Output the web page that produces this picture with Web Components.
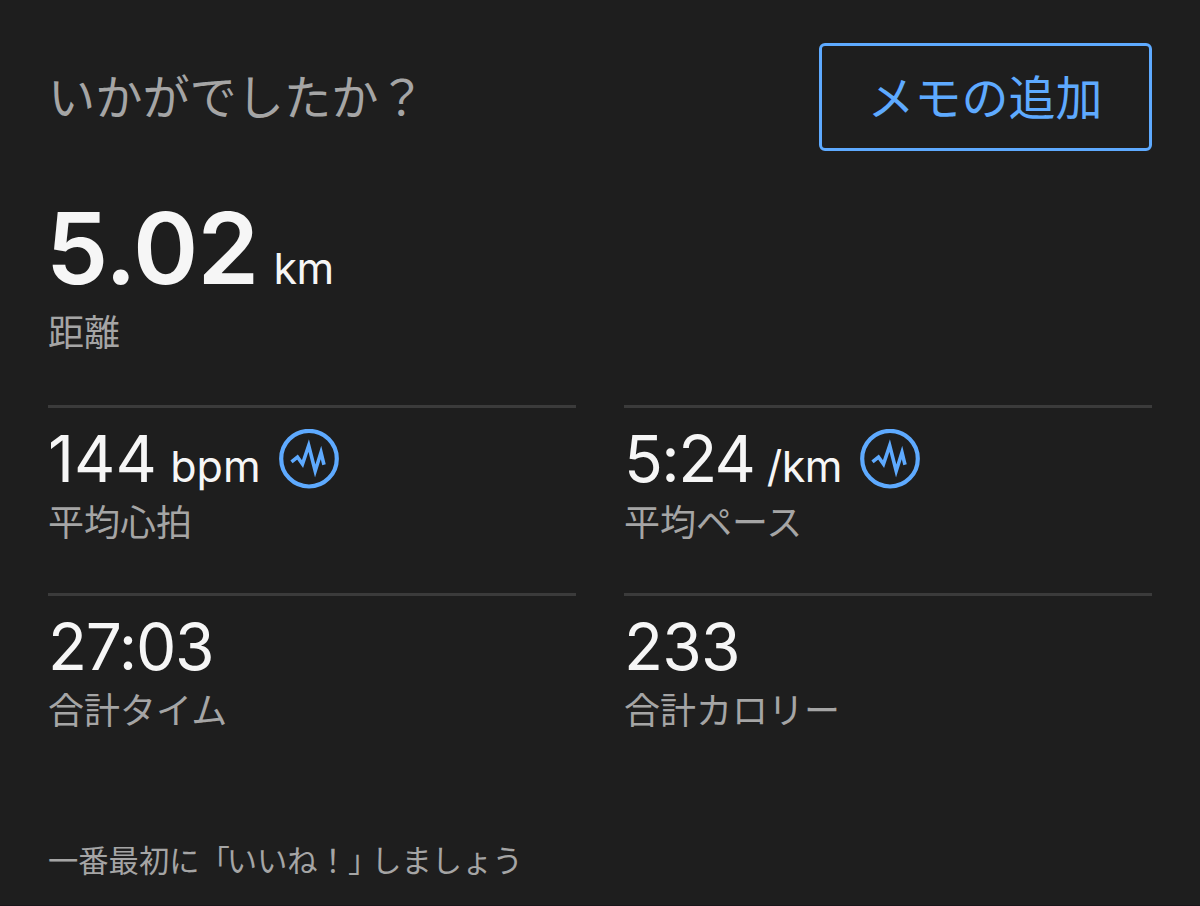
<!DOCTYPE html>
<html lang="ja">
<head>
<meta charset="UTF-8">
<meta name="viewport" content="width=device-width, initial-scale=1.0">
<title>アクティビティ</title>
<style>
    body {
        margin: 0;
        background: #1e1e1e;
        font-family: Inter, "Noto Sans CJK JP", sans-serif;
    }

    /* tighten the full-width brackets */
    .open {
        letter-spacing: -3px;
    }

    .close {
        letter-spacing: -7px;
    }
</style>
</head>
<body>
<activity-summary>
    <memo-bar slot="header">
        いかがでしたか？
        <memo-button slot="action">メモの追加</memo-button>
    </memo-bar>
    <stat-item slot="hero" large label="距離" unit="km" style="--track: -0.8px; --unit-gap: 15px">5.02</stat-item>
    <stat-item label="平均心拍" unit="bpm" pulse style="--unit-gap: 13.5px">144</stat-item>
    <stat-item label="平均ペース" unit="/km" pulse style="--track: -1.6px; --unit-track: -0.6px">5:24</stat-item>
    <stat-item label="合計タイム" style="--track: -1.2px">27:03</stat-item>
    <stat-item label="合計カロリー" style="--track: -0.8px">233</stat-item>
    <like-prompt slot="footer">一番最初に<span class="open">「</span>いいね！<span class="close">」</span>しましょう</like-prompt>
</activity-summary>

<script>
class ActivitySummary extends HTMLElement {
    connectedCallback() {
        this.attachShadow({ mode: 'open' });
        this.shadowRoot.innerHTML = `
            <style>
                :host {
                    display: flex;
                    flex-direction: column;
                    box-sizing: border-box;
                    height: 906px;
                    padding: 43px 48px 0;
                    overflow: hidden;
                    border-bottom: 1px solid #19151a;
                }

                .hero {
                    height: 254px;
                }

                .grid {
                    display: grid;
                    grid-template-columns: 1fr 1fr;
                    grid-auto-rows: 188px;
                    column-gap: 48px;
                }

                .grid ::slotted(stat-item) {
                    border-top: 3px solid #3b3b3b;
                }
            </style>

            <slot name="header"></slot>
            <div class="hero"><slot name="hero"></slot></div>
            <div class="grid"><slot></slot></div>
            <slot name="footer"></slot>
        `;
    }
}

class MemoBar extends HTMLElement {
    connectedCallback() {
        this.attachShadow({ mode: 'open' });
        this.shadowRoot.innerHTML = `
            <style>
                :host {
                    display: flex;
                    justify-content: space-between;
                    align-items: center;
                    height: 108px;
                    color: #a5a5a5;
                    font-size: 47.2px;
                    line-height: 1;
                }

                .question {
                    padding-top: 2px;
                }
            </style>

            <span class="question"><slot></slot></span>
            <slot name="action"></slot>
        `;
    }
}

class MemoButton extends HTMLElement {
    connectedCallback() {
        this.attachShadow({ mode: 'open' });
        this.shadowRoot.innerHTML = `
            <style>
                button {
                    display: block;
                    width: 333px;
                    height: 108px;
                    padding: 0 1px 0 0;
                    border: 3px solid #5eaaff;
                    border-radius: 6px;
                    background: none;
                    color: #5eaaff;
                    font: inherit;
                    font-size: 47px;
                    line-height: 1;
                }
            </style>

            <button type="button"><slot></slot></button>
        `;
    }
}

class StatItem extends HTMLElement {
    connectedCallback() {
        const unit = this.getAttribute('unit');
        this.attachShadow({ mode: 'open' });
        this.shadowRoot.innerHTML = `
            <style>
                :host {
                    display: block;
                    color: #f6f6f6;
                }

                .reading {
                    display: flex;
                    align-items: baseline;
                    height: 97px;
                    line-height: 102px;
                }

                .value {
                    font-size: 64px;
                    letter-spacing: var(--track, 0);
                }

                .unit {
                    margin-left: var(--unit-gap, 12.5px);
                    font-size: 43px;
                    letter-spacing: var(--unit-track, 0);
                }

                pulse-badge {
                    align-self: flex-start;
                    margin: 21px 0 0 18.5px;
                }

                .label {
                    color: #a5a5a5;
                    font-size: 36px;
                    line-height: 36px;
                }

                :host([large]) .reading {
                    height: 164px;
                    line-height: 195px;
                }

                :host([large]) .value {
                    margin-left: -2px;
                    font-size: 99px;
                    font-weight: 600;
                }

                :host([large]) .unit {
                    letter-spacing: -0.5px;
                }
            </style>

            <div class="reading">
                <span class="value"><slot></slot></span>
                ${unit ? `<span class="unit">${unit}</span>` : ''}
                ${this.hasAttribute('pulse') ? '<pulse-badge></pulse-badge>' : ''}
            </div>
            <div class="label">${this.getAttribute('label')}</div>
        `;
    }
}

class PulseBadge extends HTMLElement {
    connectedCallback() {
        this.attachShadow({ mode: 'open' });
        this.shadowRoot.innerHTML = `
            <style>
                :host {
                    display: block;
                    width: 60px;
                    height: 60px;
                    color: #5eaaff;
                }

                svg {
                    display: block;
                }
            </style>

            <svg width="60" height="60" viewBox="0 0 60 60" fill="none" stroke="currentColor">
                <circle cx="30" cy="29.7" r="27.8" stroke-width="4.2"/>
                <path d="M12.5 32.8 L18.5 28 L23.5 35 L29.7 16.5 L36.2 42 L42 23.5 L45 35.8" stroke-width="3.6" stroke-miterlimit="10"/>
            </svg>
        `;
    }
}

class LikePrompt extends HTMLElement {
    connectedCallback() {
        this.attachShadow({ mode: 'open' });
        this.shadowRoot.innerHTML = `
            <style>
                :host {
                    display: block;
                    margin-top: 60px;
                    color: #a5a5a5;
                    font-size: 30.3px;
                    line-height: 40px;
                    white-space: nowrap;
                }
            </style>

            <slot></slot>
        `;
    }
}

customElements.define('activity-summary', ActivitySummary);
customElements.define('memo-bar', MemoBar);
customElements.define('memo-button', MemoButton);
customElements.define('pulse-badge', PulseBadge);
customElements.define('stat-item', StatItem);
customElements.define('like-prompt', LikePrompt);
</script>
</body>
</html>
